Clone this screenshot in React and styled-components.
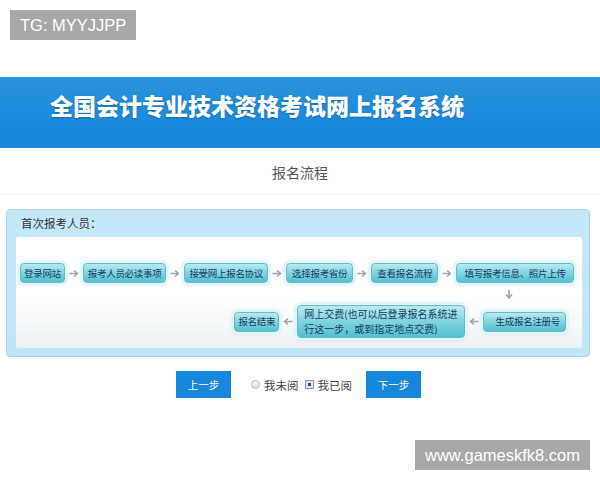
import styled, { createGlobalStyle } from "styled-components";

const GlobalStyle = createGlobalStyle`
  body {
    margin: 0;
    background: #fff;
    font-family: "Noto Sans CJK SC", "Liberation Sans", sans-serif;
  }
`;

const Page = styled.div`
  position: relative;
  width: 600px;
  height: 480px;
  padding-top: 77px;
  box-sizing: border-box;
  overflow: hidden;
`;

// grey overlay labels (top-left / bottom-right)
const Tag = styled.div`
  position: absolute;
  ${(props) => props.pos};
  height: 30px;
  padding: 0 10px;
  background: #a8a8a8;
  color: #fff;
  font-family: "Liberation Sans", Arial, sans-serif;
  font-size: 16.5px;
  line-height: 30px;
`;

const Banner = styled.div`
  height: 71px;
  background: linear-gradient(180deg, #2893e0 0%, #1c8bdc 60%, #1986d8 100%);
  padding: 12px 0 0 50px;
  box-sizing: border-box;
`;

const BannerTitle = styled.h1`
  margin: 0;
  color: #fff;
  font-family: "Noto Sans CJK SC", sans-serif;
  font-weight: 900;
  font-size: 23px;
  line-height: 32px;
  text-shadow: 0 1px 2px rgba(0, 40, 90, 0.35);
`;

const SectionTitle = styled.div`
  height: 47px;
  border-bottom: 1px solid #efefef;
  display: flex;
  align-items: center;
  justify-content: center;
  font-size: 14px;
  color: #555;
  padding-top: 2px;
  box-sizing: border-box;
`;

const Panel = styled.div`
  margin: 14px 10px 0 6px;
  height: 148px;
  border: 1px solid #a9d6ea;
  border-radius: 4px;
  background: linear-gradient(180deg, #c3e9f9 0%, #bfe6f7 100%);
  padding: 0 6px 7px 8px;
  box-sizing: border-box;
  display: flex;
  flex-direction: column;
`;

const PanelHeader = styled.div`
  height: 26px;
  line-height: 26px;
  font-size: 11.5px;
  color: #333;
  padding-left: 6px;
`;

const FlowBox = styled.div`
  flex: 1;
  border: 1px solid #cfe6f1;
  border-radius: 3px;
  background: linear-gradient(180deg, #ffffff 0%, #ffffff 55%, #edf1f3 100%);
  padding: 26px 12px 0 4px;
  display: flex;
  flex-direction: column;
`;

const Row = styled.div`
  display: flex;
  align-items: center;
  justify-content: ${(props) => props.justify || "flex-start"};
  gap: 4px;
  padding-right: ${(props) => props.padRight || 0}px;
`;

const Step = styled.div`
  flex-shrink: 0;
  display: flex;
  flex-direction: column;
  justify-content: center;
  align-items: ${(props) => (props.wide ? "flex-start" : "center")};
  height: ${(props) => (props.wide ? 31 : 18)}px;
  padding: 0 ${(props) => props.pad || 3}px 0 ${(props) => props.padLeft || props.pad || 3}px;
  border: 1px solid #5fc0cd;
  border-radius: 4px;
  background: linear-gradient(180deg, #b8ecf2 0%, #7fd3de 50%, #55c0cf 100%);
  box-shadow: 0 0 0 2px #e2f5f8, 0 0 3px 2px #c6e6ee;
  color: #1b3a66;
  font-size: ${(props) => (props.wide ? 10 : 9.5)}px;
  line-height: ${(props) => (props.wide ? 14.5 : 13)}px;
  white-space: nowrap;
  letter-spacing: ${(props) => (props.wide ? 0 : -0.3)}px;
`;

const ArrowIcon = styled.svg`
  flex-shrink: 0;
  width: 10px;
  height: 9px;
  transform: rotate(${(props) => props.rot}deg);
`;

const DownRow = styled.div`
  display: flex;
  justify-content: flex-end;
  padding-right: 56px;
  height: 22px;
  align-items: center;
`;

const Controls = styled.div`
  display: flex;
  align-items: center;
  justify-content: center;
  margin-top: 14px;
  margin-left: -3px;
`;

const Button = styled.button`
  width: 55px;
  height: 27px;
  border: none;
  background: #1787db;
  color: #fff;
  font-family: "Noto Sans CJK SC", sans-serif;
  font-size: 10.5px;
  padding: 0;
`;

const Choice = styled.label`
  display: flex;
  align-items: center;
  gap: 4px;
  font-size: 11.5px;
  color: #444;
  margin-left: ${(props) => props.ml || 0}px;
  margin-right: ${(props) => props.mr || 0}px;
`;

const Radio = styled.span`
  width: 7px;
  height: 7px;
  border-radius: 50%;
  border: 1px solid #b9b9b9;
  background: linear-gradient(#fafafa, #dcdcdc);
`;

const Check = styled.span`
  width: 7px;
  height: 7px;
  border: 1px solid #8d99b8;
  background: #dfe4f1;
  display: flex;
  align-items: center;
  justify-content: center;
  &::after {
    content: "";
    width: 3px;
    height: 3px;
    background: #39457a;
  }
`;

function Arrow({ dir = "right" }) {
  const rot = { right: 0, left: 180, down: 90 }[dir];
  return (
    <ArrowIcon viewBox="0 0 10 9" rot={rot}>
      <path d="M0.5 4.5 H8 M5 1.5 L8.5 4.5 L5 7.5" stroke="#9ea5aa" strokeWidth="1.6" fill="none" />
    </ArrowIcon>
  );
}

export default function App() {
  return (
    <Page>
      <GlobalStyle />
      <Tag pos="top: 10px; left: 10px;">TG: MYYJJPP</Tag>
      <Banner>
        <BannerTitle>全国会计专业技术资格考试网上报名系统</BannerTitle>
      </Banner>
      <SectionTitle>报名流程</SectionTitle>
      <Panel>
        <PanelHeader>首次报考人员：</PanelHeader>
        <FlowBox>
          <Row>
            <Step>登录网站</Step>
            <Arrow />
            <Step pad={4}>报考人员必读事项</Step>
            <Arrow />
            <Step pad={4}>接受网上报名协议</Step>
            <Arrow />
            <Step pad={5}>选择报考省份</Step>
            <Arrow />
            <Step pad={5}>查看报名流程</Step>
            <Arrow />
            <Step pad={7}>填写报考信息、照片上传</Step>
          </Row>
          <DownRow>
            <Arrow dir="down" />
          </DownRow>
          <Row justify="flex-end" padRight={4}>
            <Step>报名结束</Step>
            <Arrow dir="left" />
            <Step wide pad={6}>
              <span>网上交费(也可以后登录报名系统进</span>
              <span>行这一步，或到指定地点交费)</span>
            </Step>
            <Arrow dir="left" />
            <Step padLeft={12} pad={5}>生成报名注册号</Step>
          </Row>
        </FlowBox>
      </Panel>
      <Controls>
        <Button>上一步</Button>
        <Choice ml={20}>
          <Radio />
          我未阅
        </Choice>
        <Choice ml={6} mr={14}>
          <Check />
          我已阅
        </Choice>
        <Button>下一步</Button>
      </Controls>
      <Tag pos="right: 10px; bottom: 10px;">www.gameskfk8.com</Tag>
    </Page>
  );
}
